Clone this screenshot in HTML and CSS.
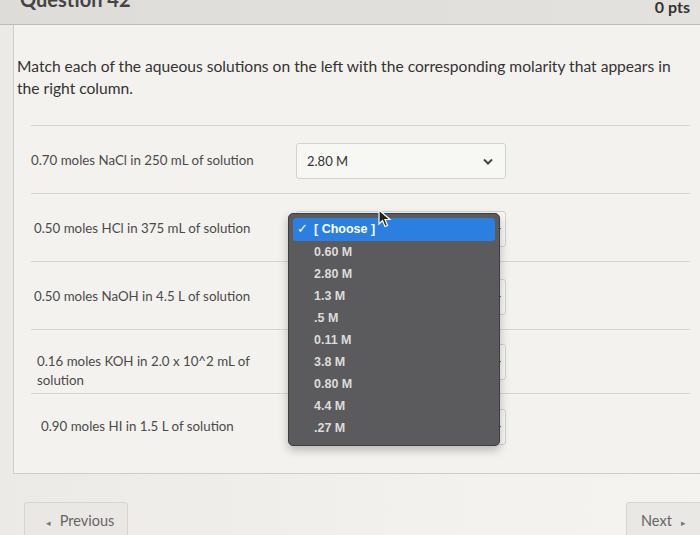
FILE: index.html
```html
<!DOCTYPE html>
<html lang="en">
<head>
  <meta charset="UTF-8" />
  <title>Question 42</title>
  <link rel="stylesheet" href="styles.css">
</head>
<body>
  <div class="q-header">
    <h2>Question 42</h2>
    <span class="pts">0 pts</span>
  </div>

  <div class="q-card">
    <p class="intro">Match each of the aqueous solutions on the left with the corresponding molarity that appears in the right column.</p>

    <div class="rows">
      <div class="row">
        <div class="label">0.70 moles NaCl in 250 mL of solution</div>
        <div class="select">
          <span>2.80 M</span>
          <svg class="chev" width="10" height="7" viewBox="0 0 10 7"><path d="M1 1.5 L5 5.5 L9 1.5" fill="none" stroke="#444" stroke-width="2"/></svg>
        </div>
      </div>

      <div class="row">
        <div class="label">0.50 moles HCl in 375 mL of solution</div>
        <div class="select">
          <span></span>
          <i class="mini"></i>
          <div class="menu">
            <div class="opt active"><span class="check">✓</span>[ Choose ]</div>
            <div class="opt">0.60 M</div>
            <div class="opt">2.80 M</div>
            <div class="opt">1.3 M</div>
            <div class="opt">.5 M</div>
            <div class="opt">0.11 M</div>
            <div class="opt">3.8 M</div>
            <div class="opt">0.80 M</div>
            <div class="opt">4.4 M</div>
            <div class="opt">.27 M</div>
          </div>
          <svg class="cursor" width="14" height="20" viewBox="0 0 14 20"><path d="M1 1 L1 15 L4.5 11.5 L7 17.5 L9.5 16.5 L7 10.5 L12 10.5 Z" fill="#222" stroke="#fff" stroke-width="1.2"/></svg>
        </div>
      </div>

      <div class="row">
        <div class="label">0.50 moles NaOH in 4.5 L of solution</div>
        <div class="select"><span></span><i class="mini"></i></div>
      </div>

      <div class="row">
        <div class="label">0.16 moles KOH in 2.0 x 10^2 mL of solution</div>
        <div class="select"><span></span><i class="mini"></i></div>
      </div>

      <div class="row last">
        <div class="label">0.90 moles HI in 1.5 L of solution</div>
        <div class="select"><span></span><i class="mini"></i></div>
      </div>
    </div>
  </div>

  <div class="nav">
    <button class="btn prev"><span class="tri">◂</span> Previous</button>
    <button class="btn next">Next <span class="tri">▸</span></button>
  </div>
</body>
</html>
```

FILE: styles.css
```css
* {
  box-sizing: border-box;
}
body {
  margin: 0;
  font-family: 'Lato', sans-serif;
  background: linear-gradient(90deg, #ebeae6 0%, #f2f1ed 60%, #f4f3f0 100%);
  color: #333;
  overflow: hidden;
  height: 535px;
}
.q-header {
  display: flex;
  justify-content: space-between;
  align-items: flex-start;
  height: 25px;
  padding: 0 10px 0 20px;
  background: linear-gradient(90deg, #dddcd8 0%, #e3e2de 100%);
  border-bottom: 1px solid #bdbcb8;
  overflow: hidden;
}
.q-header h2 {
  margin: -11px 0 0;
  font-size: 20px;
  font-weight: 700;
  color: #444;
  line-height: 20px;
}
.pts {
  margin-top: -1px;
  font-size: 16px;
  font-weight: 700;
  color: #333;
  line-height: 16px;
}
.q-card {
  margin-left: 13px;
  height: 449px;
  border-left: 1px solid #cfcecb;
  border-bottom: 1px solid #cfcecb;
  background: #f3f2ee;
}
.intro {
  margin: 0;
  padding: 30px 26px 0 3px;
  font-size: 15.6px;
  line-height: 22px;
  color: #333;
  height: 100px;
}
.rows {
  margin: 0 10px 0 17px;
}
.row {
  display: flex;
  align-items: flex-start;
  height: 68px;
  border-top: 1px solid #d6d5d1;
  padding-top: 17px;
}
.row:nth-child(4) {
  height: 64px;
  padding-top: 14px;
}
.row.last {
  padding-top: 15px;
}
.label {
  width: 265px;
  padding: 8px 0 0 0;
  font-size: 13.3px;
  line-height: 19px;
  color: #4a4a4a;
}
.row:nth-child(2) .label,
.row:nth-child(3) .label {
  padding-left: 3px;
}
.row:nth-child(4) .label {
  padding-left: 6px;
  width: 245px;
  margin-right: 20px;
}
.row.last .label {
  padding-left: 10px;
}
.select {
  position: relative;
  display: flex;
  align-items: center;
  justify-content: space-between;
  width: 210px;
  height: 36px;
  padding: 0 10px;
  background: #f7f7f4;
  border: 1px solid #d3d2ce;
  border-radius: 3px;
  font-size: 13px;
  color: #333;
}
.select .chev {
  margin-right: 2px;
}
.mini {
  width: 0;
  height: 0;
  border-left: 2px solid transparent;
  border-right: 2px solid transparent;
  border-top: 3px solid #333;
  margin-right: -6px;
}
.menu {
  position: absolute;
  left: -9px;
  top: 1px;
  width: 212px;
  padding: 4px 4px 6px;
  background: #5b5b5d;
  border: 1px solid #3e3e40;
  border-radius: 5px;
  box-shadow: 0 4px 10px rgba(0, 0, 0, 0.25);
  font-family: 'Liberation Sans', sans-serif;
  z-index: 2;
}
.opt {
  height: 22px;
  line-height: 22px;
  padding-left: 21px;
  font-size: 12.5px;
  font-weight: 700;
  color: #dcdcdc;
}
.opt.active {
  height: 23px;
  padding-left: 4px;
  background: #2b7fe0;
  border-radius: 3px;
  color: #fff;
}
.check {
  display: inline-block;
  width: 17px;
  font-family: 'DejaVu Sans', sans-serif;
  font-size: 13px;
}
.cursor {
  position: absolute;
  left: 81px;
  top: -3px;
  z-index: 3;
}
.nav {
  display: flex;
  justify-content: space-between;
  padding: 28px 0 0 24px;
}
.btn {
  height: 36px;
  font-family: 'Lato', sans-serif;
  font-size: 14.5px;
  color: #666;
  background: #e9e8e4;
  border: 1px solid #d6d5d1;
  border-radius: 3px;
}
.prev {
  width: 104px;
  padding-left: 16px;
  text-align: left;
}
.next {
  width: 74px;
  padding-left: 14px;
  text-align: left;
  border-right: none;
  border-radius: 3px 0 0 3px;
}
.tri {
  font-size: 9px;
  color: #777;
  margin: 0 5px;
}
```
